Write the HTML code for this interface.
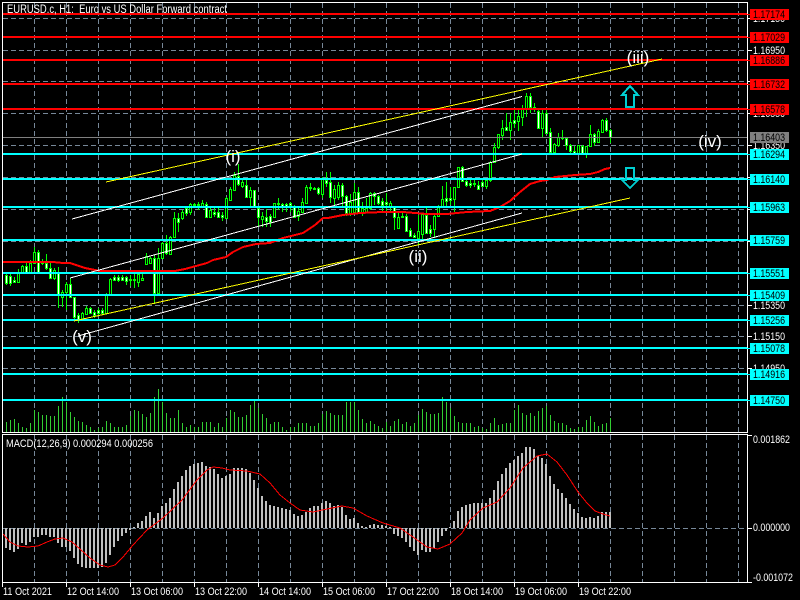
<!DOCTYPE html>
<html><head><meta charset="utf-8"><style>
html,body{margin:0;padding:0;background:#000;width:800px;height:600px;overflow:hidden}
svg{display:block}
text{font-family:"Liberation Sans",sans-serif;font-size:11px}
.g{stroke:#778899;stroke-width:1;stroke-dasharray:5 3;fill:none}
.w{fill:#fff}.k{fill:#000}
.l{font-size:17px;fill:#fff}
</style></head><body>
<svg width="800" height="600" viewBox="0 0 800 600" xmlns="http://www.w3.org/2000/svg">
<rect width="800" height="600" fill="#000"/>
<g shape-rendering="crispEdges">
<path class="g" d="M34.5 3V432M66.5 3V432M98.5 3V432M130.5 3V432M162.5 3V432M194.5 3V432M226.5 3V432M258.5 3V432M290.5 3V432M322.5 3V432M354.5 3V432M386.5 3V432M418.5 3V432M450.5 3V432M482.5 3V432M514.5 3V432M546.5 3V432M578.5 3V432M610.5 3V432M642.5 3V432M674.5 3V432M706.5 3V432M738.5 3V432"/>
<path class="g" d="M34.5 435V582M66.5 435V582M98.5 435V582M130.5 435V582M162.5 435V582M194.5 435V582M226.5 435V582M258.5 435V582M290.5 435V582M322.5 435V582M354.5 435V582M386.5 435V582M418.5 435V582M450.5 435V582M482.5 435V582M514.5 435V582M546.5 435V582M578.5 435V582M610.5 435V582M642.5 435V582M674.5 435V582M706.5 435V582M738.5 435V582"/>
<path class="g" d="M3 18.5H747M3 50.5H747M3 81.5H747M3 113.5H747M3 145.5H747M3 177.5H747M3 209.5H747M3 241.5H747M3 273.5H747M3 305.5H747M3 336.5H747M3 368.5H747M3 400.5H747M3 528.5H747"/>
<!-- volumes -->
<path fill="none" stroke="#32CD32" stroke-width="1" d="M6.5 422V432M10.5 420V432M14.5 419V432M18.5 423V432M22.5 427V432M26.5 428V432M30.5 423V432M34.5 410V432M38.5 412V432M42.5 415V432M46.5 415V432M50.5 416V432M54.5 416V432M58.5 406V432M62.5 397V432M66.5 402V432M70.5 412V432M74.5 417V432M78.5 421V432M82.5 422V432M86.5 425V432M90.5 427V432M94.5 430V432M98.5 428V432M102.5 427V432M106.5 421V432M110.5 423V432M114.5 427V432M118.5 427V432M122.5 427V432M126.5 425V432M130.5 416V432M134.5 410V432M138.5 411V432M142.5 414V432M146.5 417V432M150.5 413V432M154.5 397V432M158.5 389V432M162.5 402V432M166.5 413V432M170.5 418V432M174.5 418V432M178.5 410V432M182.5 423V432M186.5 427V432M190.5 425V432M194.5 427V432M198.5 427V432M202.5 422V432M206.5 422V432M210.5 422V432M214.5 427V432M218.5 423V432M222.5 427V432M226.5 418V432M230.5 410V432M234.5 412V432M238.5 417V432M242.5 417V432M246.5 415V432M250.5 405V432M254.5 401V432M258.5 408V432M262.5 414V432M266.5 418V432M270.5 424V432M274.5 422V432M278.5 422V432M282.5 427V432M286.5 430V432M290.5 427V432M294.5 427V432M298.5 423V432M302.5 423V432M306.5 423V432M310.5 426V432M314.5 426V432M318.5 423V432M322.5 414V432M326.5 411V432M330.5 413V432M334.5 415V432M338.5 415V432M342.5 415V432M346.5 402V432M350.5 402V432M354.5 402V432M358.5 410V432M362.5 419V432M366.5 423V432M370.5 421V432M374.5 424V432M378.5 426V432M382.5 428V432M386.5 422V432M390.5 426V432M394.5 421V432M398.5 419V432M402.5 424V432M406.5 422V432M410.5 426V432M414.5 423V432M418.5 415V432M422.5 409V432M426.5 412V432M430.5 414V432M434.5 414V432M438.5 413V432M442.5 397V432M446.5 402V432M450.5 408V432M454.5 416V432M458.5 422V432M462.5 423V432M466.5 423V432M470.5 423V432M474.5 427V432M478.5 426V432M482.5 428V432M486.5 429V432M490.5 423V432M494.5 418V432M498.5 425V432M502.5 424V432M506.5 423V432M510.5 423V432M514.5 410V432M518.5 405V432M522.5 413V432M526.5 415V432M530.5 413V432M534.5 416V432M538.5 411V432M542.5 408V432M546.5 406V432M550.5 415V432M554.5 421V432M558.5 423V432M562.5 423V432M566.5 425V432M570.5 428V432M574.5 429V432M578.5 427V432M582.5 427V432M586.5 420V432M590.5 416V432M594.5 422V432M598.5 426V432M602.5 424V432M606.5 423V432M610.5 418V432"/>
<!-- wicks -->
<path fill="none" stroke="#0f0" stroke-width="1" d="M6.5 274V285M10.5 274V286M14.5 277V283M18.5 269V283M22.5 265V273M26.5 263V273M30.5 260V273M34.5 247V263M38.5 250V273M42.5 259V265M46.5 254V270M50.5 263V279M54.5 268V280M58.5 267V308M62.5 290V307M66.5 282V310M70.5 278V298M74.5 297V321M78.5 313V323M82.5 312V321M86.5 306V315M90.5 307V314M94.5 310V318M98.5 308V315M102.5 308V314M106.5 293V313M110.5 278V296M114.5 275V281M118.5 275V282M122.5 275V281M126.5 276V285M130.5 275V286M134.5 273V288M138.5 273V287M142.5 273V280M146.5 253V265M150.5 257V263M154.5 255V304M158.5 248V293M162.5 242V259M166.5 235V255M170.5 236V255M174.5 212V238M178.5 213V232M182.5 210V220M186.5 207V216M190.5 203V215M194.5 203V208M198.5 202V210M202.5 200V208M206.5 202V218M210.5 208V218M214.5 208V217M218.5 208V218M222.5 212V221M226.5 197V219M230.5 187V200M234.5 172V191M238.5 164V186M242.5 178V188M246.5 180V197M250.5 187V207M254.5 190V208M258.5 207V227M262.5 212V227M266.5 209V227M270.5 214V227M274.5 203V218M278.5 198V210M282.5 203V212M286.5 203V212M290.5 202V212M294.5 205V218M298.5 208V221M302.5 198V213M306.5 185V203M310.5 183V191M314.5 187V190M318.5 187V195M322.5 177V198M326.5 172V187M330.5 172V203M334.5 185V205M338.5 182V200M342.5 183V206M346.5 195V216M350.5 194V216M354.5 183V213M358.5 187V213M362.5 202V216M366.5 198V213M370.5 192V210M374.5 192V205M378.5 195V205M382.5 198V212M386.5 193V212M390.5 201V212M394.5 206V230M398.5 213V229M402.5 213V218M406.5 214V232M410.5 228V237M414.5 233V238M418.5 215V245M422.5 213V240M426.5 208V234M430.5 225V237M434.5 215V238M438.5 205V217M442.5 186V208M446.5 182V207M450.5 187V205M454.5 187V212M458.5 167V188M462.5 166V182M466.5 179V187M470.5 180V188M474.5 179V187M478.5 181V190M482.5 178V187M486.5 178V189M490.5 161V182M494.5 143V163M498.5 134V149M502.5 120V140M506.5 113V131M510.5 113V140M514.5 110V128M518.5 108V131M522.5 105V126M526.5 93V117M530.5 93V113M534.5 103V112M538.5 110V129M542.5 110V137M546.5 110V133M550.5 128V153M554.5 143V153M558.5 133V147M562.5 130V140M566.5 137V150M570.5 144V153M574.5 146V153M578.5 145V154M582.5 145V153M586.5 146V158M590.5 125V146M594.5 133V146M598.5 129V143M602.5 119V133M606.5 118V132M610.5 129V143"/>
<!-- bear bodies (white) -->
<path class="w" stroke="#0f0" stroke-width="1" d="M5.5 275.5h2v8h-2zM9.5 276.5h2v7h-2zM13.5 280.5h2v2h-2zM25.5 266.5h2v6h-2zM37.5 252.5h2v20h-2zM45.5 263.5h2v5h-2zM49.5 268.5h2v10h-2zM57.5 273.5h2v22h-2zM69.5 284.5h2v13h-2zM73.5 297.5h2v20h-2zM77.5 315.5h2v4h-2zM89.5 308.5h2v5h-2zM93.5 312.5h2v3h-2zM97.5 310.5h2v3h-2zM101.5 310.5h2v3h-2zM113.5 277.5h2v3h-2zM117.5 277.5h2v3h-2zM121.5 277.5h2v3h-2zM125.5 277.5h2v4h-2zM153.5 258.5h2v35h-2zM165.5 243.5h2v10h-2zM177.5 218.5h2v4h-2zM185.5 208.5h2v5h-2zM193.5 204.5h2v1h-2zM197.5 204.5h2v1h-2zM205.5 204.5h2v13h-2zM213.5 212.5h2v2h-2zM217.5 212.5h2v5h-2zM221.5 215.5h2v2h-2zM237.5 176.5h2v8h-2zM245.5 185.5h2v12h-2zM253.5 190.5h2v17h-2zM257.5 208.5h2v9h-2zM265.5 217.5h2v4h-2zM269.5 216.5h2v6h-2zM281.5 204.5h2v2h-2zM285.5 204.5h2v2h-2zM289.5 203.5h2v2h-2zM293.5 207.5h2v10h-2zM317.5 188.5h2v5h-2zM325.5 180.5h2v3h-2zM329.5 182.5h2v15h-2zM341.5 185.5h2v11h-2zM345.5 196.5h2v17h-2zM357.5 192.5h2v21h-2zM373.5 193.5h2v3h-2zM377.5 196.5h2v7h-2zM381.5 201.5h2v4h-2zM385.5 202.5h2v2h-2zM393.5 207.5h2v10h-2zM405.5 216.5h2v15h-2zM409.5 230.5h2v6h-2zM413.5 235.5h2v2h-2zM425.5 215.5h2v18h-2zM429.5 229.5h2v4h-2zM445.5 198.5h2v3h-2zM449.5 198.5h2v2h-2zM461.5 167.5h2v14h-2zM465.5 181.5h2v4h-2zM469.5 183.5h2v2h-2zM473.5 183.5h2v1h-2zM477.5 185.5h2v4h-2zM481.5 182.5h2v4h-2zM505.5 127.5h2v3h-2zM513.5 120.5h2v3h-2zM529.5 96.5h2v11h-2zM533.5 107.5h2v2h-2zM537.5 111.5h2v17h-2zM545.5 113.5h2v20h-2zM549.5 132.5h2v20h-2zM565.5 138.5h2v7h-2zM569.5 145.5h2v6h-2zM573.5 151.5h2v2h-2zM581.5 146.5h2v7h-2zM593.5 134.5h2v8h-2zM605.5 120.5h2v10h-2zM609.5 130.5h2v7h-2z"/>
<!-- bull bodies (black) -->
<path class="k" stroke="#0f0" stroke-width="1" d="M17.5 273.5h2v9h-2zM21.5 266.5h2v6h-2zM29.5 263.5h2v9h-2zM33.5 252.5h2v11h-2zM41.5 261.5h2v2h-2zM53.5 270.5h2v8h-2zM61.5 292.5h2v5h-2zM65.5 284.5h2v8h-2zM81.5 313.5h2v6h-2zM85.5 308.5h2v6h-2zM105.5 295.5h2v18h-2zM109.5 279.5h2v16h-2zM129.5 279.5h2v1h-2zM133.5 279.5h2v1h-2zM137.5 274.5h2v8h-2zM141.5 278.5h2v2h-2zM145.5 256.5h2v8h-2zM149.5 258.5h2v5h-2zM157.5 258.5h2v35h-2zM161.5 243.5h2v15h-2zM169.5 237.5h2v17h-2zM173.5 218.5h2v19h-2zM181.5 212.5h2v6h-2zM189.5 204.5h2v8h-2zM201.5 203.5h2v4h-2zM209.5 210.5h2v7h-2zM225.5 198.5h2v20h-2zM229.5 189.5h2v11h-2zM233.5 175.5h2v15h-2zM241.5 182.5h2v4h-2zM249.5 190.5h2v7h-2zM261.5 216.5h2v3h-2zM273.5 203.5h2v14h-2zM277.5 203.5h2v1h-2zM297.5 211.5h2v5h-2zM301.5 202.5h2v10h-2zM305.5 187.5h2v16h-2zM309.5 187.5h2v1h-2zM313.5 188.5h2v1h-2zM321.5 179.5h2v15h-2zM333.5 189.5h2v9h-2zM337.5 185.5h2v12h-2zM349.5 202.5h2v11h-2zM353.5 192.5h2v20h-2zM361.5 208.5h2v4h-2zM365.5 208.5h2v4h-2zM369.5 193.5h2v15h-2zM389.5 203.5h2v3h-2zM397.5 217.5h2v11h-2zM401.5 216.5h2v1h-2zM417.5 231.5h2v7h-2zM421.5 214.5h2v20h-2zM433.5 216.5h2v13h-2zM437.5 207.5h2v9h-2zM441.5 199.5h2v8h-2zM453.5 187.5h2v12h-2zM457.5 167.5h2v20h-2zM485.5 180.5h2v6h-2zM489.5 162.5h2v18h-2zM493.5 147.5h2v15h-2zM497.5 134.5h2v13h-2zM501.5 128.5h2v7h-2zM509.5 122.5h2v8h-2zM517.5 116.5h2v5h-2zM521.5 108.5h2v9h-2zM525.5 96.5h2v12h-2zM541.5 113.5h2v15h-2zM553.5 144.5h2v8h-2zM557.5 137.5h2v8h-2zM561.5 137.5h2v1h-2zM577.5 145.5h2v8h-2zM585.5 146.5h2v8h-2zM589.5 134.5h2v12h-2zM597.5 131.5h2v11h-2zM601.5 120.5h2v12h-2z"/>
<!-- moving average -->
<polyline fill="none" stroke="#f00" stroke-width="2" points="3,262 53,262 63,263 70,263 85,268 100,271 175,271 185,269 207,263 213,260 226,257 233,252 243,247 256,244 270,243 283,238 303,233 315,225 323,218 328,218 343,215 360,213 383,212 403,212 427,214 447,214 467,212 490,211 500,207 510,201 520,192 530,184 540,181 547,180 555,177 565,176 575,175 590,174 598,172 605,169 610,168"/>
<!-- horizontal lines -->
<path stroke="#f00" stroke-width="2" fill="none" d="M3 14H747M3 37H747M3 60H747M3 84H747M3 109H747"/>
<path stroke="#808080" stroke-width="1" fill="none" d="M3 137.5H747"/>
<path stroke="#0ff" stroke-width="2" fill="none" d="M3 154H747M3 179H747M3 207H747M3 240H747M3 273H747M3 295H747M3 320H747M3 348H747M3 374H747M3 400H747"/>
<!-- channel lines -->
<path stroke="#fff" stroke-width="1" fill="none" d="M72 219L522 96.500M70 278L522 154M78 336L522 213"/>
<path stroke="#ff0" stroke-width="1" fill="none" d="M106 182L662 59M74 321L630 198"/>
<!-- arrows -->
<path fill="none" stroke="#00CED1" stroke-width="2" d="M630 86L638 95H634V107H626V95H622Z"/>
<path fill="none" stroke="#00CED1" stroke-width="2" d="M626 168H634V180H638L630 188L622 180H626Z"/>
<!-- MACD histogram -->
<path fill="none" stroke="#c0c0c0" stroke-width="2" d="M6 528V548M10 528V550M14 528V552M18 528V549M22 528V543M26 528V545M30 528V542M34 528V537M38 528V537M42 528V535M46 528V535M50 528V537M54 528V537M58 528V543M62 528V547M66 528V547M70 528V551M74 528V558M78 528V564M82 528V567M86 528V568M90 528V568M94 528V568M98 528V568M102 528V567M106 528V563M110 528V555M114 528V547M118 528V541M122 528V536M126 528V533M130 528V530M134 528V527M138 528V523M142 528V521M146 528V516M150 528V512M154 528V518M158 528V513M162 528V506M166 528V503M170 528V498M174 528V489M178 528V482M182 528V476M186 528V470M190 528V466M194 528V464M198 528V463M202 528V462M206 528V466M210 528V467M214 528V469M218 528V474M222 528V478M226 528V476M230 528V474M234 528V468M238 528V468M242 528V468M246 528V469M250 528V473M254 528V480M258 528V488M262 528V496M266 528V501M270 528V505M274 528V506M278 528V507M282 528V508M286 528V509M290 528V510M294 528V514M298 528V516M302 528V515M306 528V512M310 528V508M314 528V506M318 528V506M322 528V503M326 528V501M330 528V503M334 528V506M338 528V505M342 528V507M346 528V515M350 528V519M354 528V518M358 528V523M362 528V526M366 528V527M370 528V525M374 528V524M378 528V525M382 528V525M386 528V526M390 528V527M394 528V534M398 528V536M402 528V538M406 528V542M410 528V547M414 528V551M418 528V555M422 528V550M426 528V552M430 528V552M434 528V548M438 528V542M442 528V536M446 528V531M450 528V527M454 528V521M458 528V511M462 528V507M466 528V505M470 528V504M474 528V503M478 528V503M482 528V503M486 528V503M490 528V498M494 528V490M498 528V481M502 528V474M506 528V468M510 528V463M514 528V460M518 528V456M522 528V453M526 528V447M530 528V447M534 528V449M538 528V456M542 528V458M546 528V464M550 528V476M554 528V484M558 528V489M562 528V493M566 528V498M570 528V504M574 528V509M578 528V513M582 528V517M586 528V518M590 528V517M594 528V518M598 528V516M602 528V512M606 528V512M610 528V512"/>
<polyline fill="none" stroke="#f00" stroke-width="1" points="3,534 10,542 18,546 28,547 38,546 47,542 55,539 63,538 72,542 80,549 90,558 100,565 108,567 115,565 123,557 133,545 147,530 163,518 182,500 197,480 207,470 213,467 222,468 230,470 247,471 260,474 270,483 280,495 290,503 300,510 313,512 327,509 342,506 353,508 367,516 383,523 400,528 413,537 427,547 438,549 450,544 462,533 470,520 483,508 497,502 510,488 523,468 530,462 537,456 547,454 557,462 567,475 578,492 587,503 595,511 603,514 610,516"/>
<!-- frame -->
<path fill="none" stroke="#fff" stroke-width="1" d="M2.500 2.500H747.500V432.500H2.500ZM2.500 434.500H747.500V582.500H2.500ZM747 18.500H752M747 50.500H752M747 81.500H752M747 113.500H752M747 145.500H752M747 177.500H752M747 209.500H752M747 241.500H752M747 273.500H752M747 305.500H752M747 336.500H752M747 368.500H752M747 400.500H752M747 435.500H752M747 528.500H752M747 582.500H752M2.500 582V587M66.500 582V587M130.500 582V587M194.500 582V587M258.500 582V587M322.500 582V587M386.500 582V587M450.500 582V587M514.500 582V587M578.500 582V587"/>
</g>
<!-- text -->
<text x="7" y="13" fill="#fff" style="font-size:11.5px;white-space:pre" xml:space="preserve" textLength="220" lengthAdjust="spacingAndGlyphs">EURUSD.c, H1:  Euro vs US Dollar Forward contract</text>
<text class="l" x="233" y="162" text-anchor="middle">(i)</text>
<text class="l" x="418" y="262" text-anchor="middle">(ii)</text>
<text class="l" x="638" y="63" text-anchor="middle">(iii)</text>
<text class="l" x="710" y="147" text-anchor="middle">(iv)</text>
<text class="l" x="82" y="342" text-anchor="middle">(v)</text>
<g fill="#fff">
<text x="753" y="22" textLength="32" lengthAdjust="spacingAndGlyphs">1.17150</text>
<text x="753" y="54" textLength="32" lengthAdjust="spacingAndGlyphs">1.16950</text>
<text x="753" y="117" textLength="32" lengthAdjust="spacingAndGlyphs">1.16550</text>
<text x="753" y="149" textLength="32" lengthAdjust="spacingAndGlyphs">1.16350</text>
<text x="753" y="309" textLength="32" lengthAdjust="spacingAndGlyphs">1.15350</text>
<text x="753" y="340" textLength="32" lengthAdjust="spacingAndGlyphs">1.15150</text>
<text x="753" y="372" textLength="32" lengthAdjust="spacingAndGlyphs">1.14950</text>
</g>
<g shape-rendering="crispEdges">
<path stroke="#f00" stroke-width="1" fill="none" d="M747 14.500H750M747 37.500H750M747 60.500H750M747 84.500H750M747 109.500H750"/>
<path stroke="#0ff" stroke-width="1" fill="none" d="M747 154.500H750M747 179.500H750M747 207.500H750M747 240.500H750M747 273.500H750M747 295.500H750M747 320.500H750M747 348.500H750M747 374.500H750M747 400.500H750"/>
<rect x="750" y="9" width="39" height="11" fill="#f00"/>
<rect x="750" y="32" width="39" height="11" fill="#f00"/>
<rect x="750" y="55" width="39" height="11" fill="#f00"/>
<rect x="750" y="79" width="39" height="11" fill="#f00"/>
<rect x="750" y="104" width="39" height="11" fill="#f00"/>
<rect x="750" y="132" width="39" height="11" fill="#808080"/>
<rect x="750" y="149" width="39" height="11" fill="#0ff"/>
<rect x="750" y="174" width="39" height="11" fill="#0ff"/>
<rect x="750" y="202" width="39" height="11" fill="#0ff"/>
<rect x="750" y="235" width="39" height="11" fill="#0ff"/>
<rect x="750" y="268" width="39" height="11" fill="#0ff"/>
<rect x="750" y="290" width="39" height="11" fill="#0ff"/>
<rect x="750" y="315" width="39" height="11" fill="#0ff"/>
<rect x="750" y="343" width="39" height="11" fill="#0ff"/>
<rect x="750" y="369" width="39" height="11" fill="#0ff"/>
<rect x="750" y="395" width="39" height="11" fill="#0ff"/>
</g>
<g fill="#000">
<text x="753" y="18" textLength="32" lengthAdjust="spacingAndGlyphs">1.17174</text>
<text x="753" y="41" textLength="32" lengthAdjust="spacingAndGlyphs">1.17029</text>
<text x="753" y="64" textLength="32" lengthAdjust="spacingAndGlyphs">1.16886</text>
<text x="753" y="88" textLength="32" lengthAdjust="spacingAndGlyphs">1.16732</text>
<text x="753" y="113" textLength="32" lengthAdjust="spacingAndGlyphs">1.16578</text>
<text x="753" y="141" textLength="32" lengthAdjust="spacingAndGlyphs">1.16403</text>
<text x="753" y="158" textLength="32" lengthAdjust="spacingAndGlyphs">1.16294</text>
<text x="753" y="183" textLength="32" lengthAdjust="spacingAndGlyphs">1.16140</text>
<text x="753" y="211" textLength="32" lengthAdjust="spacingAndGlyphs">1.15963</text>
<text x="753" y="244" textLength="32" lengthAdjust="spacingAndGlyphs">1.15759</text>
<text x="753" y="277" textLength="32" lengthAdjust="spacingAndGlyphs">1.15551</text>
<text x="753" y="299" textLength="32" lengthAdjust="spacingAndGlyphs">1.15409</text>
<text x="753" y="324" textLength="32" lengthAdjust="spacingAndGlyphs">1.15256</text>
<text x="753" y="352" textLength="32" lengthAdjust="spacingAndGlyphs">1.15078</text>
<text x="753" y="378" textLength="32" lengthAdjust="spacingAndGlyphs">1.14916</text>
<text x="753" y="404" textLength="32" lengthAdjust="spacingAndGlyphs">1.14750</text>
</g>
<g fill="#fff">
<text x="6" y="447" textLength="147" lengthAdjust="spacingAndGlyphs">MACD(12,26,9) 0.000294 0.000256</text>
<text x="753" y="443" textLength="37" lengthAdjust="spacingAndGlyphs">0.001862</text>
<text x="753" y="531" textLength="37" lengthAdjust="spacingAndGlyphs">0.000000</text>
<text x="753" y="581" textLength="40" lengthAdjust="spacingAndGlyphs">-0.001072</text>
<text x="3" y="595" textLength="49" lengthAdjust="spacingAndGlyphs">11 Oct 2021</text>
<text x="67" y="595" textLength="52" lengthAdjust="spacingAndGlyphs">12 Oct 14:00</text>
<text x="131" y="595" textLength="52" lengthAdjust="spacingAndGlyphs">13 Oct 06:00</text>
<text x="195" y="595" textLength="52" lengthAdjust="spacingAndGlyphs">13 Oct 22:00</text>
<text x="259" y="595" textLength="52" lengthAdjust="spacingAndGlyphs">14 Oct 14:00</text>
<text x="323" y="595" textLength="52" lengthAdjust="spacingAndGlyphs">15 Oct 06:00</text>
<text x="387" y="595" textLength="52" lengthAdjust="spacingAndGlyphs">17 Oct 22:00</text>
<text x="451" y="595" textLength="52" lengthAdjust="spacingAndGlyphs">18 Oct 14:00</text>
<text x="515" y="595" textLength="52" lengthAdjust="spacingAndGlyphs">19 Oct 06:00</text>
<text x="579" y="595" textLength="52" lengthAdjust="spacingAndGlyphs">19 Oct 22:00</text>
</g>
</svg>
</body></html>
